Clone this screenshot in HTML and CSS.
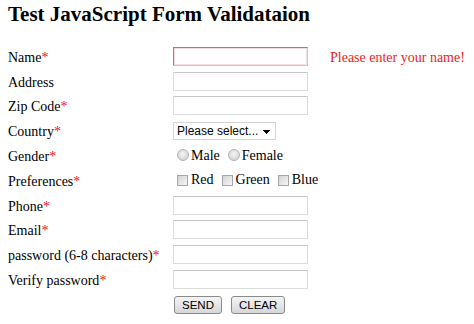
FILE: index.html
```html
<!DOCTYPE html>
<html>
<head>
<meta charset="utf-8">
<title>Test JavaScript Form Validataion</title>
<link rel="stylesheet" href="styles.css">
</head>
<body>
<h1 class="title">Test JavaScript Form Validataion</h1>
<form class="form">
  <label class="lbl">Name<span class="req">*</span></label>
  <div class="field"><input class="txt txt-error" type="text"></div>
  <div class="err">Please enter your name!</div>

  <label class="lbl">Address</label>
  <div class="field"><input class="txt" type="text"></div>
  <div></div>

  <label class="lbl">Zip Code<span class="req">*</span></label>
  <div class="field"><input class="txt" type="text"></div>
  <div></div>

  <label class="lbl">Country<span class="req">*</span></label>
  <div class="field"><select class="sel"><option>Please select...</option></select></div>
  <div></div>

  <label class="lbl">Gender<span class="req">*</span></label>
  <div class="field opts">
    <label class="opt"><input class="radio" type="radio" name="g">Male</label>
    <label class="opt"><input class="radio" type="radio" name="g">Female</label>
  </div>
  <div></div>

  <label class="lbl">Preferences<span class="req">*</span></label>
  <div class="field opts">
    <label class="opt"><input class="check" type="checkbox">Red</label>
    <label class="opt"><input class="check" type="checkbox">Green</label>
    <label class="opt"><input class="check" type="checkbox">Blue</label>
  </div>
  <div></div>

  <label class="lbl">Phone<span class="req">*</span></label>
  <div class="field"><input class="txt" type="text"></div>
  <div></div>

  <label class="lbl">Email<span class="req">*</span></label>
  <div class="field"><input class="txt" type="text"></div>
  <div></div>

  <label class="lbl">password (6-8 characters)<span class="req">*</span></label>
  <div class="field"><input class="txt" type="password"></div>
  <div></div>

  <label class="lbl">Verify password<span class="req">*</span></label>
  <div class="field"><input class="txt" type="password"></div>
  <div></div>

  <div></div>
  <div class="field btns">
    <button class="btn" type="button">SEND</button>
    <button class="btn" type="button">CLEAR</button>
  </div>
  <div></div>
</form>
</body>
</html>
```
FILE: styles.css
```css
html, body {
  background: #fff;
}
body {
  margin: 2px 8px 8px 8px;
  font-family: "Liberation Serif", "Times New Roman", serif;
  font-size: 14px;
  color: #000;
}
.title {
  margin: 0 0 18px 0;
  font-size: 21px;
  line-height: 24px;
  font-weight: bold;
}
.form {
  display: grid;
  grid-template-columns: 165px 157px auto;
  grid-auto-rows: 24.8px;
  align-items: center;
}
.lbl {
  white-space: nowrap;
  line-height: 16px;
  padding-top: 3px;
}
.req {
  color: #e8141c;
}
.err {
  color: #ee1c24;
  white-space: nowrap;
  line-height: 16px;
  padding-top: 3px;
}
.field {
  display: flex;
  align-items: center;
}
.txt {
  box-sizing: border-box;
  width: 135px;
  height: 19px;
  margin: 0;
  padding: 0 2px;
  border: 1px solid #dcdcdc;
  border-top-color: #c6c6c6;
  background: #fff;
  outline: none;
}
.txt-error {
  border-color: #b8737a #ebb8bd #ebb8bd #b8737a;
  box-shadow: inset 0 0 0 1px #f6dde0;
}
.sel {
  -webkit-appearance: none;
  appearance: none;
  box-sizing: border-box;
  width: 103px;
  height: 18px;
  margin: 0;
  padding: 0 0 0 3px;
  border: 1px solid #d4d4d4;
  border-radius: 0;
  font-family: "Liberation Sans", Arial, sans-serif;
  font-size: 12px;
  color: #000;
  background-color: #fff;
  background-image:
    linear-gradient(45deg, transparent 50%, #000 50%),
    linear-gradient(135deg, #000 50%, transparent 50%);
  background-position: 89px 7px, 93px 7px;
  background-size: 4px 4px, 4px 4px;
  background-repeat: no-repeat;
}
.opts {
  gap: 8px;
  padding-left: 4px;
  line-height: 16px;
}
.opt {
  display: inline-flex;
  align-items: center;
  white-space: nowrap;
}
.radio {
  -webkit-appearance: none;
  appearance: none;
  box-sizing: border-box;
  width: 12px;
  height: 12px;
  margin: 0 2px 2px 0;
  border: 1px solid #b4b4b4;
  border-radius: 50%;
  background: radial-gradient(circle at 50% 40%, #f4f4f4 0%, #d8d8d8 70%, #c8c8c8 100%);
}
.check {
  -webkit-appearance: none;
  appearance: none;
  box-sizing: border-box;
  width: 11px;
  height: 11px;
  margin: 0 3px 0 0;
  border: 1px solid #a6a6a6;
  border-radius: 0;
  background: linear-gradient(135deg, #d2d2d2 0%, #e6e6e6 55%, #f6f6f6 100%);
}
.btns {
  gap: 9px;
  padding-left: 1px;
  padding-top: 2px;
}
.btn {
  box-sizing: border-box;
  height: 18px;
  margin: 0;
  padding: 0 7px;
  font-family: "Liberation Sans", Arial, sans-serif;
  font-size: 11.5px;
  line-height: 16px;
  color: #000;
  border: 1px solid #8a8a8a;
  border-radius: 3px;
  background: linear-gradient(to bottom, #f4f4f4 0%, #e6e6e6 50%, #d6d6d6 100%);
}
```
